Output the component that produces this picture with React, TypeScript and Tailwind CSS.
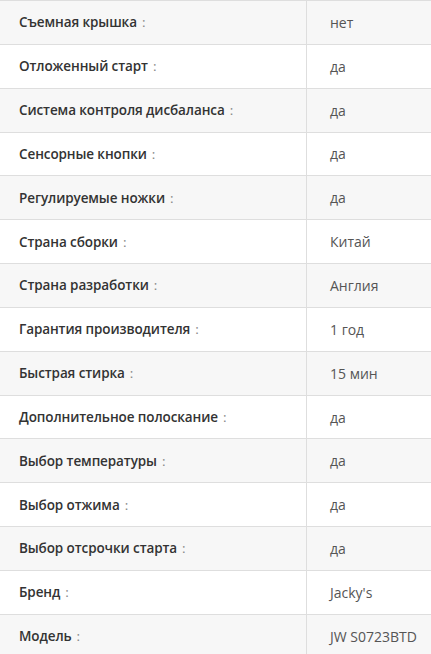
const rows: Array<[string, string]> = [
  ["Съемная крышка", "нет"],
  ["Отложенный старт", "да"],
  ["Система контроля дисбаланса", "да"],
  ["Сенсорные кнопки", "да"],
  ["Регулируемые ножки", "да"],
  ["Страна сборки", "Китай"],
  ["Страна разработки", "Англия"],
  ["Гарантия производителя", "1 год"],
  ["Быстрая стирка", "15 мин"],
  ["Дополнительное полоскание", "да"],
  ["Выбор температуры", "да"],
  ["Выбор отжима", "да"],
  ["Выбор отсрочки старта", "да"],
  ["Бренд", "Jacky's"],
  ["Модель", "JW S0723BTD"],
]

const App = () => {
  return (
    <div className="w-[431px] h-[654px] overflow-hidden bg-white font-['Open_Sans',sans-serif] text-[13.5px]">
      <div className="border-t border-[#dedede]">
        {rows.map(([label, value], i) => (
          <div
            key={label}
            className={`flex h-[43.85px] border-b border-[#dedede] ${i % 2 === 0 ? "bg-[#f7f7f7]" : "bg-white"}`}
          >
            <div className="w-[307px] shrink-0 flex items-center pl-[19px] border-r border-[#dedede]">
              <span className="font-semibold text-[#333] tracking-[-0.1px]">{label}</span>
              <span className="text-[#888] ml-[5px]">:</span>
            </div>
            <div className="flex-1 flex items-center pl-[23px] text-[14px] text-[#555]">{value}</div>
          </div>
        ))}
      </div>
    </div>
  )
}

export default App
